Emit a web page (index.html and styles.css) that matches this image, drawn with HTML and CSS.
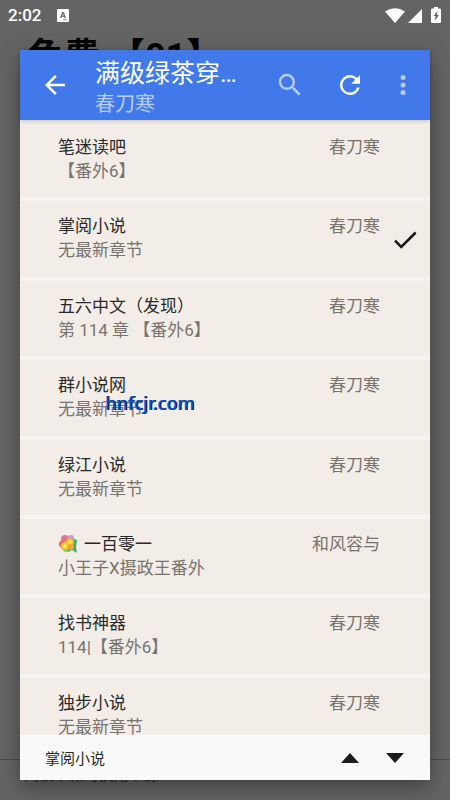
FILE: index.html
```html
<!DOCTYPE html>
<html lang="zh-CN">
<head>
<meta charset="utf-8">
<meta name="viewport" content="width=device-width, initial-scale=1">
<title>换源</title>
<link rel="stylesheet" href="styles.css">
</head>
<body>
<div class="page">
  <header class="status">
    <span class="clock">2:02</span>
    <svg class="app" viewBox="0 0 12 13" width="12" height="13"><path fill="#fff" fill-rule="evenodd" d="M1 0h10q1 0 1 1v11q0 1-1 1H1q-1 0-1-1V1q0-1 1-1zM5.200 3L3 9h1.400l.4-1.300h2.400L7.600 9H9L6.800 3zM5.200 6.500L6 4.300l.8 2.200zM6 10.500h4v.8H6z"/></svg>
    <svg class="signals" viewBox="0 0 57 17" width="57" height="17" fill="#fff"><path d="M0 4.500Q10 -2 20 4.500L10 16z"/><path d="M37 2v14H23z"/><path fill-rule="evenodd" d="M49 0h4v1.500h2q1 0 1 1V15q0 1-1 1h-8q-1 0-1-1V2.500q0-1 1-1h2zM52.500 4L48.500 9h2l-.5 4.500 4-5.500h-2z"/></svg>
  </header>
  <h1 class="chapter">免费 【01】</h1>
  <footer class="under"><span>阅读书籍时换用书源</span></footer>
</div>
<section class="dialog" role="dialog" aria-labelledby="book">
  <header class="bar">
    <button class="icon" aria-label="返回"><svg viewBox="0 0 24 24" width="30" height="30"><path fill="#fff" d="M20 11H7.830l5.590-5.590L12 4l-8 8 8 8 1.410-1.410L7.830 13H20v-2z"/></svg></button>
    <div class="titles"><h2 id="book">满级绿茶穿成小师妹</h2><p>春刀寒</p></div>
    <button class="icon" aria-label="搜索"><svg viewBox="0 0 24 24" width="30" height="30"><path fill="#b9cdf7" d="M15.500 14h-.79l-.28-.27A6.471 6.471 0 0 0 16 9.500 6.500 6.500 0 1 0 9.500 16c1.610 0 3.090-.59 4.230-1.570l.27.280v.79l5 4.990L20.490 19l-4.990-5zm-6 0C7.010 14 5 11.990 5 9.500S7.010 5 9.500 5 14 7.010 14 9.500 11.990 14 9.500 14z"/></svg></button>
    <button class="icon" aria-label="刷新"><svg viewBox="0 0 24 24" width="30" height="30"><path fill="#fff" d="M17.650 6.350A7.958 7.958 0 0 0 12 4a8 8 0 1 0 7.730 10h-2.080A5.990 5.990 0 0 1 12 18a6 6 0 1 1 4.220-10.220L13 11h7V4l-2.350 2.350z"/></svg></button>
    <button class="icon more" aria-label="更多"><svg viewBox="0 0 24 24" width="30" height="30" fill="#b9cdf7"><circle cx="12" cy="6" r="2"/><circle cx="12" cy="12" r="2"/><circle cx="12" cy="18" r="2"/></svg></button>
  </header>
  <div class="scroll">
    <ul class="list">
      <li><h3>笔迷读吧</h3><span>春刀寒</span><p>【番外6】</p></li>
      <li><h3>掌阅小说</h3><span>春刀寒</span><p>无最新章节</p><svg class="check" viewBox="0 0 24 24" width="30" height="30"><path fill="none" stroke="#171717" stroke-width="2" d="M4 12.500l5 5L20.500 6"/></svg></li>
      <li><h3>五六中文（发现）</h3><span>春刀寒</span><p>第 114 章 【番外6】</p></li>
      <li><h3>群小说网</h3><span>春刀寒</span><p>无最新章节</p><b class="mark">hnfcjr.com</b></li>
      <li><h3>绿江小说</h3><span>春刀寒</span><p>无最新章节</p></li>
      <li><h3><svg class="flower" viewBox="0 0 20 20" width="20" height="20"><path fill="#45ad72" d="M4 14l6 4 4-2 5 3-1-6 1-7-5-2z"/><path fill="#75c55a" d="M2 13l5 5 4-2-3-6z"/><circle cx="7" cy="5" r="4" fill="#ed6f91"/><circle cx="13" cy="4" r="3" fill="#b7a0df"/><circle cx="4" cy="10" r="3" fill="#ee5b54"/><circle cx="12" cy="8" r="4" fill="#f7b33b"/><circle cx="7" cy="12" r="4" fill="#f6c332"/><circle cx="13" cy="13" r="3" fill="#f3a636"/><circle cx="12" cy="8" r="2" fill="#fff04c"/><circle cx="7" cy="12" r="2" fill="#fff04c"/></svg>一百零一</h3><span>和风容与</span><p>小王子X摄政王番外</p></li>
      <li><h3>找书神器</h3><span>春刀寒</span><p>114|【番外6】</p></li>
      <li><h3>独步小说</h3><span>春刀寒</span><p>无最新章节</p></li>
    </ul>
  </div>
  <footer class="current">
    <span>掌阅小说</span>
    <button class="icon" aria-label="顶部"><svg viewBox="0 0 20 10" width="20" height="10"><path fill="#1b1b1b" d="M1 10l9-10 9 10z"/></svg></button>
    <button class="icon" aria-label="底部"><svg viewBox="0 0 20 10" width="20" height="10"><path fill="#1b1b1b" d="M1 0l9 10 9-10z"/></svg></button>
  </footer>
</section>
</body>
</html>
```
FILE: styles.css
```css
* { box-sizing: border-box; }
body, h1, h2, h3, p, ul { margin: 0; padding: 0; font-weight: 400; }
body { font-family: Roboto, "Noto Sans CJK SC", sans-serif; color: #2a2928; }
svg { display: block; flex: none; }
.page { display: flex; flex-direction: column; height: 100vh; background: #646464; overflow: hidden; }
.status { display: flex; align-items: center; height: 30px; padding: 0 8px; color: #fff; }
.clock { font-size: 17px; font-weight: 500; }
.app { margin-left: 16px; }
.signals { margin-left: auto; }
.chapter { flex: 1; padding-left: 28px; font-size: 36px; line-height: 54px; font-weight: 700; color: #050505; }
.under { height: 41px; border-top: 1px solid #4b4b4b; padding: 5px 24px; font-size: 15px; line-height: 20px; color: #222; }
.dialog { position: absolute; inset: 50px 20px 20px; display: flex; flex-direction: column; background: #f4f4f4; box-shadow: 0 8px 20px rgba(0, 0, 0, .35); }
.icon { display: flex; align-items: center; justify-content: center; width: 60px; height: 60px; padding: 0; border: 0; background: none; }
.bar { display: flex; align-items: center; height: 70px; padding: 0 5px; background: #4179ea; color: #fff; z-index: 1; box-shadow: 0 1px 4px rgba(0, 0, 0, .2); flex: none; }
.bar .more { width: 45px; }
.titles { flex: 1; min-width: 0; padding: 6px 15px 0 10px; }
.titles h2 { font-size: 25px; line-height: 32px; white-space: nowrap; overflow: hidden; text-overflow: ellipsis; }
.titles p { font-size: 20px; line-height: 28px; color: #b9cdf7; }
.scroll { flex: 1; min-height: 0; overflow: hidden; background: #f2ede7; }
.list { display: grid; grid-auto-rows: 1fr; height: 637px; padding-top: 2px; list-style: none; }
.list li { position: relative; display: grid; grid-template-columns: 1fr auto; grid-template-rows: 24px 24px; padding: 13px 50px 0 38px; border-bottom: 4px solid #f4f4f4; background: #f2ede7; font-size: 17px; line-height: 24px; white-space: nowrap; }
.list h3 { display: flex; align-items: center; gap: 6px; font-size: 17px; }
.list span, .list p { color: #777470; }
.list p { grid-column: 1 / -1; }
.check { position: absolute; right: 10px; top: 24px; }
.mark { position: absolute; left: 85px; top: 31px; font: 500 18px/24px "Noto Sans", sans-serif; color: #0756cf; text-shadow: 1px 0 0 #092347; }
.current { display: flex; align-items: center; height: 45px; padding: 0 13px 0 25px; background: #f9f9f8; font-size: 15px; flex: none; }
.current span { flex: 1; }
.current .icon { width: 45px; height: 45px; }
```
